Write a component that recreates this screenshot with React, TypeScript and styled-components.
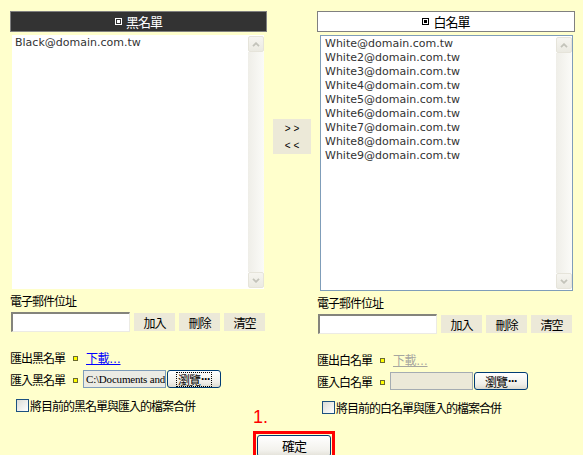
import React from "react";
import styled, { createGlobalStyle } from "styled-components";

const GlobalStyle = createGlobalStyle`
  * { box-sizing: border-box; }
  html, body { margin: 0; padding: 0; background: #ffffcc; overflow: hidden; }
  body {
    font-family: "Liberation Sans", "Noto Sans CJK TC", sans-serif;
    font-size: 11px;
    color: #000;
  }
`;

const Page = styled.div`
  width: 583px;
  height: 455px;
  padding: 11px 0 0 10px;
  background: #ffffcc;
  overflow: hidden;
`;

const Columns = styled.div`
  display: flex;
  align-items: flex-start;
`;

const Panel = styled.div<{ $width: number }>`
  width: ${(p) => p.$width}px;
  display: flex;
  flex-direction: column;
`;

const Header = styled.div<{ $dark?: boolean }>`
  height: 21px;
  border: 1px solid #808080;
  background: ${(p) => (p.$dark ? "#333333" : "#ffffff")};
  color: ${(p) => (p.$dark ? "#ffffff" : "#000000")};
  display: flex;
  align-items: center;
  justify-content: center;
  gap: 4px;
  font-family: "Noto Sans CJK TC", sans-serif;
  font-size: 13px;
  letter-spacing: -1px;
  line-height: 1;
`;

const HeaderMark = styled.span`
  width: 7px;
  height: 7px;
  border: 1px solid currentColor;
  padding: 1px;
  display: inline-flex;
  &::after {
    content: "";
    flex: 1;
    background: currentColor;
  }
`;

const ListBox = styled.div<{ $bordered?: boolean; $height: number; $ml: number; $mr: number }>`
  margin: 3px ${(p) => p.$mr}px 0 ${(p) => p.$ml}px;
  height: ${(p) => p.$height}px;
  background: #ffffff;
  border: ${(p) => (p.$bordered ? "1px solid #7f9db9" : "none")};
  display: flex;
`;

const Items = styled.div<{ $pl: number; $pt: number }>`
  flex: 1;
  padding: ${(p) => p.$pt}px 0 0 ${(p) => p.$pl}px;
  font-family: "DejaVu Sans", Verdana, sans-serif;
  font-size: 11px;
  line-height: 14px;
  color: #333333;
`;

const Item = styled.div`
  white-space: nowrap;
`;

const ScrollBar = styled.div`
  width: 16px;
  margin: 1px 0;
  display: flex;
  flex-direction: column;
`;

const ScrollButton = styled.div`
  height: 16px;
  border: 1px solid #e6e4da;
  border-radius: 2px;
  background: linear-gradient(#f6f5f0, #ebeae2);
  display: flex;
  align-items: center;
  justify-content: center;
`;

const ScrollTrack = styled.div`
  flex: 1;
  background: linear-gradient(to right, #efeee8, #fbfbf8);
`;

const cjk = `
  font-family: "Noto Sans CJK TC", sans-serif;
  font-size: 12px;
  letter-spacing: -1px;
`;

const FieldLabel = styled.div`
  margin-top: 5px;
  line-height: 14px;
  ${cjk}
`;

const InputRow = styled.div`
  margin-top: 4px;
  height: 20px;
  display: flex;
  align-items: center;
  gap: 4px;
`;

const TextInput = styled.div`
  width: 119px;
  height: 20px;
  margin-left: 1px;
  background: #ffffff;
  border-top: 2px solid #84847c;
  border-left: 2px solid #84847c;
  border-right: 1px solid #ecebe4;
  border-bottom: 1px solid #ecebe4;
`;

const FlatButton = styled.div`
  width: 41px;
  height: 18px;
  background: #ece9d8;
  display: flex;
  align-items: center;
  justify-content: center;
  ${cjk}
`;

const OptionRow = styled.div<{ $mt: number }>`
  margin-top: ${(p) => p.$mt}px;
  height: 18px;
  display: flex;
  align-items: center;
  white-space: nowrap;
`;

const OptionLabel = styled.span`
  ${cjk}
`;

const Bullet = styled.span<{ $after: number }>`
  width: 5px;
  height: 5px;
  margin: 2px ${(p) => p.$after}px 0 8px;
  background: #ffff00;
  border: 1px solid #6b6b30;
`;

const Link = styled.span<{ $disabled?: boolean }>`
  color: ${(p) => (p.$disabled ? "#a6a6a0" : "#0000ff")};
  text-decoration: underline;
  font-size: 12px;
  letter-spacing: -0.5px;
`;

const FileBox = styled.div<{ $disabled?: boolean }>`
  width: 83px;
  height: 18px;
  border: 1px solid ${(p) => (p.$disabled ? "#a5acb2" : "#7f9db9")};
  background: ${(p) => (p.$disabled ? "#ece9d8" : "#ebebe4")};
  padding-left: 2px;
  overflow: hidden;
  white-space: nowrap;
  font-family: "Liberation Serif", serif;
  font-size: 11px;
  line-height: 16px;
  letter-spacing: -0.2px;
`;

const BrowseButton = styled.div`
  width: 54px;
  height: 18px;
  margin-left: 1px;
  border: 1px solid #003c74;
  border-radius: 3px;
  background: linear-gradient(#ffffff, #f0efe9 70%, #dcdad0);
  display: flex;
  align-items: center;
  justify-content: center;
  font-family: "Noto Sans CJK TC", sans-serif;
  font-size: 12px;
`;

const BrowseText = styled.span<{ $focused?: boolean }>`
  border: 1px dotted ${(p) => (p.$focused ? "#000" : "transparent")};
  padding: 0 1px;
  height: 15px;
  line-height: 13px;
  display: inline-flex;
  align-items: center;
  letter-spacing: -1px;
`;

const Dots = styled.span`
  font-family: "Liberation Sans", sans-serif;
  font-weight: bold;
  font-size: 12px;
  letter-spacing: -1px;
  margin-left: 1px;
`;

const CheckRow = styled.div<{ $ml: number }>`
  margin-top: 9px;
  height: 16px;
  padding-left: ${(p) => p.$ml}px;
  display: flex;
  align-items: center;
  gap: 1px;
  white-space: nowrap;
  ${cjk}
`;

const CheckBox = styled.span`
  width: 13px;
  height: 13px;
  border: 1px solid #1c5180;
  background: linear-gradient(135deg, #dcdcd7, #ffffff);
`;

const Middle = styled.div`
  width: 50px;
  display: flex;
  flex-direction: column;
`;

const MoveBox = styled.div`
  margin: 108px 0 0 6px;
  width: 38px;
  height: 35px;
  background: #ece9d8;
  display: flex;
  flex-direction: column;
  align-items: center;
  justify-content: center;
  font-family: "Liberation Sans", sans-serif;
  font-size: 10px;
  line-height: 17px;
  color: #000;
`;

const Footer = styled.div`
  margin-top: -7px;
  padding-left: 243px;
  display: flex;
  flex-direction: column;
  align-items: flex-start;
`;

const StepLabel = styled.div`
  font-family: "Liberation Sans", sans-serif;
  font-size: 18px;
  line-height: 18px;
  color: #ff0000;
`;

const Highlight = styled.div`
  margin-top: 5px;
  width: 82px;
  height: 28px;
  border: 3px solid #ff0000;
  padding: 1px;
`;

const ConfirmButton = styled.div`
  width: 74px;
  height: 22px;
  border: 1px solid #003c74;
  border-radius: 3px;
  background: linear-gradient(#ffffff, #f3f2ed 70%, #e3e1d8);
  display: flex;
  justify-content: center;
  padding-top: 2px;
  font-family: "Noto Sans CJK TC", sans-serif;
  font-size: 13px;
  letter-spacing: -1px;
  line-height: 16px;
`;

const Chevron = ({ up }: { up?: boolean }) => (
  <svg width="8" height="5" viewBox="0 0 8 5">
    <polyline
      points={up ? "1,4.2 4,1.2 7,4.2" : "1,0.8 4,3.8 7,0.8"}
      fill="none"
      stroke="#c3c3ba"
      strokeWidth="1.8"
    />
  </svg>
);

const Scroller = () => (
  <ScrollBar>
    <ScrollButton>
      <Chevron up />
    </ScrollButton>
    <ScrollTrack />
    <ScrollButton>
      <Chevron />
    </ScrollButton>
  </ScrollBar>
);

type Side = {
  dark: boolean;
  title: string;
  items: string[];
  bordered: boolean;
  listHeight: number;
  ml: number;
  mr: number;
  pl: number;
  pt: number;
  exportLabel: string;
  importLabel: string;
  linkDisabled: boolean;
  fileText: string;
  fileDisabled: boolean;
  focused: boolean;
  mergeText: string;
  checkMl: number;
};

const ListPanel = ({ s }: { s: Side }) => (
  <Panel $width={s.dark ? 257 : 258}>
    <Header $dark={s.dark}>
      <HeaderMark />
      <span>{s.title}</span>
    </Header>
    <ListBox $bordered={s.bordered} $height={s.listHeight} $ml={s.ml} $mr={s.mr}>
      <Items $pl={s.pl} $pt={s.pt}>
        {s.items.map((it) => (
          <Item key={it}>{it}</Item>
        ))}
      </Items>
      <Scroller />
    </ListBox>
    <FieldLabel>電子郵件位址</FieldLabel>
    <InputRow>
      <TextInput />
      <FlatButton>加入</FlatButton>
      <FlatButton>刪除</FlatButton>
      <FlatButton>清空</FlatButton>
    </InputRow>
    <OptionRow $mt={16}>
      <OptionLabel>{s.exportLabel}</OptionLabel>
      <Bullet $after={8} />
      <Link $disabled={s.linkDisabled}>下載…</Link>
    </OptionRow>
    <OptionRow $mt={4}>
      <OptionLabel>{s.importLabel}</OptionLabel>
      <Bullet $after={5} />
      <FileBox $disabled={s.fileDisabled}>{s.fileText}</FileBox>
      <BrowseButton>
        <BrowseText $focused={s.focused}>
          瀏覽<Dots>···</Dots>
        </BrowseText>
      </BrowseButton>
    </OptionRow>
    <CheckRow $ml={s.checkMl}>
      <CheckBox />
      <span>{s.mergeText}</span>
    </CheckRow>
  </Panel>
);

const black: Side = {
  dark: true,
  title: "黑名單",
  items: ["Black@domain.com.tw"],
  bordered: false,
  listHeight: 254,
  ml: 2,
  mr: 3,
  pl: 3,
  pt: 1,
  exportLabel: "匯出黑名單",
  importLabel: "匯入黑名單",
  linkDisabled: false,
  fileText: "C:\\Documents and",
  fileDisabled: false,
  focused: true,
  mergeText: "將目前的黑名單與匯入的檔案合併",
  checkMl: 6,
};

const white: Side = {
  dark: false,
  title: "白名單",
  items: [
    "White@domain.com.tw",
    "White2@domain.com.tw",
    "White3@domain.com.tw",
    "White4@domain.com.tw",
    "White5@domain.com.tw",
    "White6@domain.com.tw",
    "White7@domain.com.tw",
    "White8@domain.com.tw",
    "White9@domain.com.tw",
  ],
  bordered: true,
  listHeight: 256,
  ml: 3,
  mr: 2,
  pl: 4,
  pt: 1,
  exportLabel: "匯出白名單",
  importLabel: "匯入白名單",
  linkDisabled: true,
  fileText: "",
  fileDisabled: true,
  focused: false,
  mergeText: "將目前的白名單與匯入的檔案合併",
  checkMl: 5,
};

export default function App() {
  return (
    <>
      <GlobalStyle />
      <Page>
        <Columns>
          <ListPanel s={black} />
          <Middle>
            <MoveBox>
              <span>&gt; &gt;</span>
              <span>&lt; &lt;</span>
            </MoveBox>
          </Middle>
          <ListPanel s={white} />
        </Columns>
        <Footer>
          <StepLabel>1.</StepLabel>
          <Highlight>
            <ConfirmButton>確定</ConfirmButton>
          </Highlight>
        </Footer>
      </Page>
    </>
  );
}
